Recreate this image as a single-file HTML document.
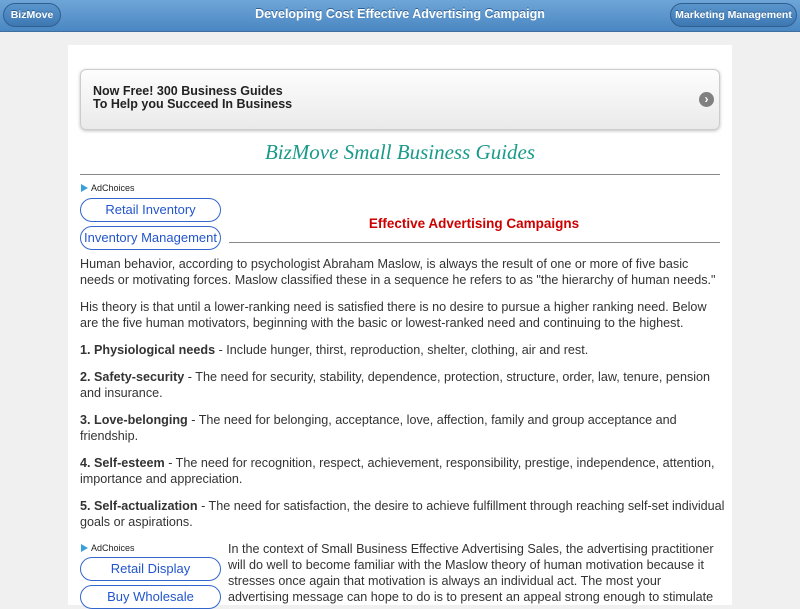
<!DOCTYPE html>
<html><head><meta charset="utf-8"><style>
body{margin:0;background:#f0f0f0;font-family:"Liberation Sans",Arial,sans-serif;width:800px;height:600px;overflow:hidden;position:relative}
.hdr{position:absolute;left:0;top:0;width:800px;height:31px;background:linear-gradient(#6fa6d8,#4a87c2);border-bottom:1px solid #3f6f9f}
.hdr .t{position:absolute;left:0;width:800px;top:7px;text-align:center;color:#fff;font-weight:bold;font-size:12.5px;text-shadow:0 -1px 0 #2f5f8f}
.hb{position:absolute;top:3px;height:22px;border:1px solid #2f5f8f;border-radius:12px;background:linear-gradient(#5a95cc,#3d78b3);color:#fff;font-weight:bold;font-size:10.5px;line-height:22px;text-align:center;text-shadow:0 -1px 0 #2f5f8f}
.main{position:absolute;left:68px;top:45px;width:664px;height:560px;background:#fff}
.ad{position:absolute;left:80px;top:69px;width:638px;height:59px;border:1px solid #ccc;border-radius:6px;background:linear-gradient(#fdfdfd,#eaeaea);box-shadow:0 1px 3px rgba(0,0,0,.25)}
.ad .tx{position:absolute;left:12px;top:15px;font-weight:bold;font-size:12.5px;line-height:13px;color:#222}
.ad .ar{position:absolute;right:5px;top:22px;width:15px;height:15px;border-radius:50%;background:#808080;color:#fff;font-size:12px;line-height:14px;text-align:center;font-weight:bold}
.title{position:absolute;left:68px;width:664px;top:140px;text-align:center;font-family:"Liberation Serif",serif;font-style:italic;font-size:21px;color:#1a9a8a}
.hr{position:absolute;height:1px;background:#888}
.adc{position:absolute;font-size:9px;color:#222}
.adc i{display:inline-block;width:0;height:0;border-left:7px solid #3aa0d8;border-top:4px solid transparent;border-bottom:4px solid transparent;margin-right:3px;vertical-align:-1px}
.btn{position:absolute;left:80px;width:139px;height:22px;border:1px solid #3366cc;border-radius:12px;color:#2255cc;font-size:13px;line-height:22px;text-align:center;background:#fff}
.h2{position:absolute;left:228px;width:492px;top:216px;text-align:center;color:#cc0000;font-weight:bold;font-size:13.5px}
.txt{position:absolute;left:80px;width:645px;font-size:12.6px;line-height:16px;color:#333}
.txt p{margin:0 0 11px}
</style></head><body>
<div class="hdr"><div class="t">Developing Cost Effective Advertising Campaign</div>
<div class="hb" style="left:3px;width:56px">BizMove</div>
<div class="hb" style="left:670px;width:125px">Marketing Management</div></div>
<div class="main"></div>
<div class="ad"><div class="tx">Now Free! 300 Business Guides<br>To Help you Succeed In Business</div><div class="ar">›</div></div>
<div class="title">BizMove Small Business Guides</div>
<div class="hr" style="left:80px;width:640px;top:174px"></div>
<div class="adc" style="left:81px;top:183px"><i></i>AdChoices</div>
<div class="btn" style="top:198px">Retail Inventory</div>
<div class="btn" style="top:226px">Inventory Management</div>
<div class="h2">Effective Advertising Campaigns</div>
<div class="hr" style="left:229px;width:491px;top:242px"></div>
<div class="txt" style="top:256px">
<p>Human behavior, according to psychologist Abraham Maslow, is always the result of one or more of five basic needs or motivating forces. Maslow classified these in a sequence he refers to as "the hierarchy of human needs."</p>
<p>His theory is that until a lower-ranking need is satisfied there is no desire to pursue a higher ranking need. Below are the five human motivators, beginning with the basic or lowest-ranked need and continuing to the highest.</p>
<p><b>1. Physiological needs</b> - Include hunger, thirst, reproduction, shelter, clothing, air and rest.</p>
<p><b>2. Safety-security</b> - The need for security, stability, dependence, protection, structure, order, law, tenure, pension and insurance.</p>
<p><b>3. Love-belonging</b> - The need for belonging, acceptance, love, affection, family and group acceptance and friendship.</p>
<p><b>4. Self-esteem</b> - The need for recognition, respect, achievement, responsibility, prestige, independence, attention, importance and appreciation.</p>
<p><b>5. Self-actualization</b> - The need for satisfaction, the desire to achieve fulfillment through reaching self-set individual goals or aspirations.</p>
</div>
<div class="adc" style="left:81px;top:543px"><i></i>AdChoices</div>
<div class="btn" style="top:557px">Retail Display</div>
<div class="btn" style="top:585px">Buy Wholesale</div>
<div class="txt" style="left:228px;width:495px;top:541px">In the context of Small Business Effective Advertising Sales, the advertising practitioner will do well to become familiar with the Maslow theory of human motivation because it stresses once again that motivation is always an individual act. The most your advertising message can hope to do is to present an appeal strong enough to stimulate</div>
</body></html>
